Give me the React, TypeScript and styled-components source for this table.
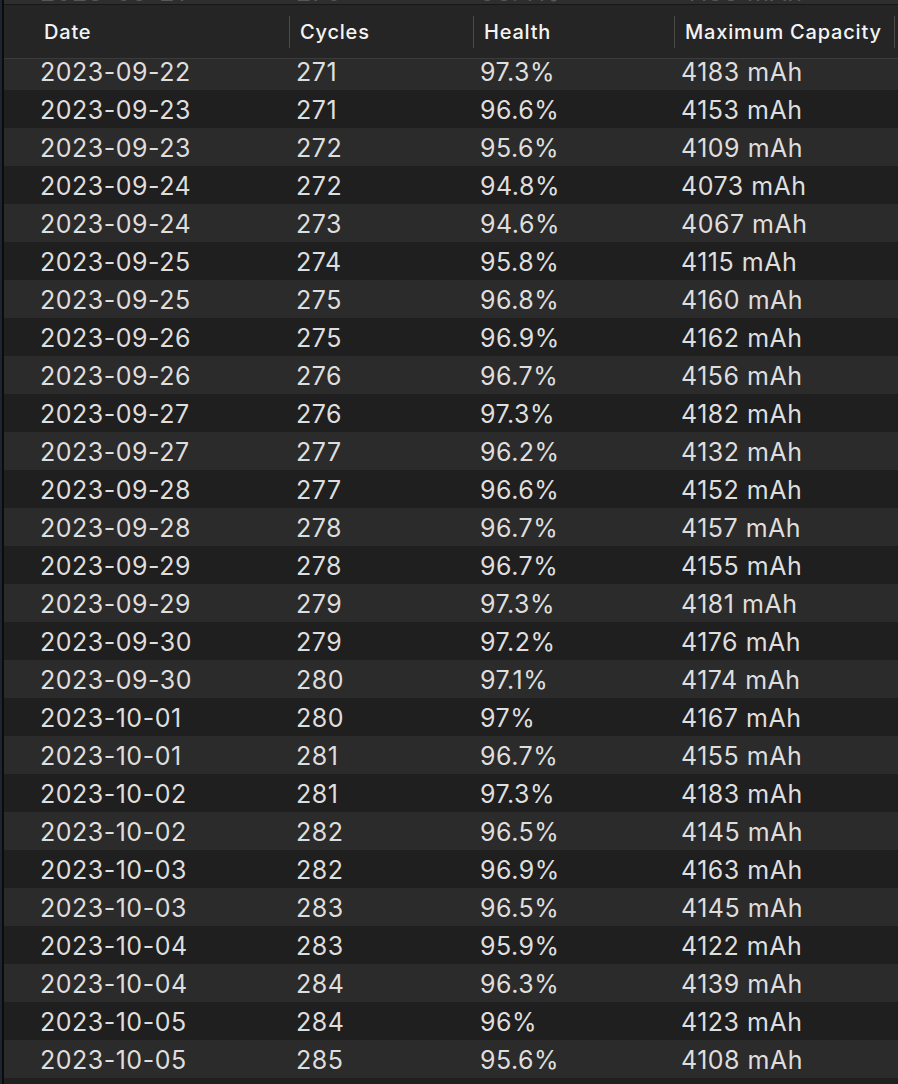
import React from 'react';
import styled, { createGlobalStyle } from 'styled-components';

const GlobalStyle = createGlobalStyle`
  html, body {
    margin: 0;
    padding: 0;
    background: #1f1f1f;
  }
  body {
    font-family: Inter, "Noto Sans", "Liberation Sans", sans-serif;
    -webkit-font-smoothing: antialiased;
  }
`;

type Entry = { date: string; cycles: number; health: string; capacity: number };

const history: Entry[] = [
  { date: '2023-09-22', cycles: 271, health: '97.3%', capacity: 4183 },
  { date: '2023-09-23', cycles: 271, health: '96.6%', capacity: 4153 },
  { date: '2023-09-23', cycles: 272, health: '95.6%', capacity: 4109 },
  { date: '2023-09-24', cycles: 272, health: '94.8%', capacity: 4073 },
  { date: '2023-09-24', cycles: 273, health: '94.6%', capacity: 4067 },
  { date: '2023-09-25', cycles: 274, health: '95.8%', capacity: 4115 },
  { date: '2023-09-25', cycles: 275, health: '96.8%', capacity: 4160 },
  { date: '2023-09-26', cycles: 275, health: '96.9%', capacity: 4162 },
  { date: '2023-09-26', cycles: 276, health: '96.7%', capacity: 4156 },
  { date: '2023-09-27', cycles: 276, health: '97.3%', capacity: 4182 },
  { date: '2023-09-27', cycles: 277, health: '96.2%', capacity: 4132 },
  { date: '2023-09-28', cycles: 277, health: '96.6%', capacity: 4152 },
  { date: '2023-09-28', cycles: 278, health: '96.7%', capacity: 4157 },
  { date: '2023-09-29', cycles: 278, health: '96.7%', capacity: 4155 },
  { date: '2023-09-29', cycles: 279, health: '97.3%', capacity: 4181 },
  { date: '2023-09-30', cycles: 279, health: '97.2%', capacity: 4176 },
  { date: '2023-09-30', cycles: 280, health: '97.1%', capacity: 4174 },
  { date: '2023-10-01', cycles: 280, health: '97%', capacity: 4167 },
  { date: '2023-10-01', cycles: 281, health: '96.7%', capacity: 4155 },
  { date: '2023-10-02', cycles: 281, health: '97.3%', capacity: 4183 },
  { date: '2023-10-02', cycles: 282, health: '96.5%', capacity: 4145 },
  { date: '2023-10-03', cycles: 282, health: '96.9%', capacity: 4163 },
  { date: '2023-10-03', cycles: 283, health: '96.5%', capacity: 4145 },
  { date: '2023-10-04', cycles: 283, health: '95.9%', capacity: 4122 },
  { date: '2023-10-04', cycles: 284, health: '96.3%', capacity: 4139 },
  { date: '2023-10-05', cycles: 284, health: '96%', capacity: 4123 },
  { date: '2023-10-05', cycles: 285, health: '95.6%', capacity: 4108 },
];

const COLUMNS = '285px 184px 201px 1fr';

const Frame = styled.div`
  height: 1084px;
  padding-left: 2px;
  background: #1c2632;
  overflow: hidden;
`;

const Window = styled.div`
  height: 100%;
  border-left: 2px solid #0b0b0b;
  display: flex;
  flex-direction: column;
  background: #1f1f1f;
  overflow: hidden;
`;

const TopStrip = styled.div`
  height: 4px;
  flex: none;
  background: #2e2e2e;
  border-bottom: 1px solid #171717;
  display: grid;
  grid-template-columns: ${COLUMNS};
  align-items: end;
  overflow: hidden;
`;

const GhostCell = styled.div<{ $first?: boolean }>`
  padding-left: ${(p) => (p.$first ? '36px' : '7px')};
  font-size: 25px;
  letter-spacing: 0.5px;
  line-height: 1;
  height: 4px;
  color: #585858;
  white-space: nowrap;
  display: flex;
  align-items: flex-end;

  span {
    display: block;
    margin-bottom: -1px;
  }
`;

const Header = styled.div`
  height: 53px;
  flex: none;
  display: grid;
  grid-template-columns: ${COLUMNS};
  align-items: center;
  background: #252525;
  border-bottom: 1px solid #3b3b3b;
  position: relative;
  z-index: 1;
`;

const HeaderCell = styled.div<{ $first?: boolean; $last?: boolean }>`
  position: relative;
  height: 100%;
  display: flex;
  align-items: center;
  padding-left: ${(p) => (p.$first ? '40px' : '11px')};
  font-size: 20px;
  font-weight: 500;
  letter-spacing: 0.8px;
  color: #f4f4f4;
  white-space: nowrap;

  &::before {
    content: ${(p) => (p.$first ? 'none' : "''")};
    position: absolute;
    left: 0;
    top: 11px;
    bottom: 10px;
    width: 1px;
    background: #4a4a4a;
  }

  &::after {
    content: ${(p) => (p.$last ? "''" : 'none')};
    position: absolute;
    right: 3px;
    top: 11px;
    bottom: 10px;
    width: 1px;
    background: #4a4a4a;
  }
`;

const Body = styled.div`
  flex: 1;
  overflow: hidden;
  background: #1f1f1f;
`;

const RowList = styled.div`
  margin-top: -7px;
`;

const Row = styled.div<{ $odd: boolean }>`
  height: 38px;
  display: grid;
  grid-template-columns: ${COLUMNS};
  align-items: center;
  background: ${(p) => (p.$odd ? '#2b2b2b' : '#1f1f1f')};
`;

const Cell = styled.div<{ $first?: boolean }>`
  padding-left: ${(p) => (p.$first ? '36px' : '7px')};
  padding-top: 2px;
  font-size: 25px;
  letter-spacing: 0.5px;
  line-height: 30px;
  color: #dedede;
  white-space: nowrap;
`;

export default function App() {
  return (
    <>
      <GlobalStyle />
      <Frame>
        <Window>
          <TopStrip aria-hidden>
            <GhostCell $first><span>2023-09-21</span></GhostCell>
            <GhostCell><span>270</span></GhostCell>
            <GhostCell><span>96.4%</span></GhostCell>
            <GhostCell><span>4153 mAh</span></GhostCell>
          </TopStrip>
          <Header>
            <HeaderCell $first>Date</HeaderCell>
            <HeaderCell>Cycles</HeaderCell>
            <HeaderCell>Health</HeaderCell>
            <HeaderCell $last>Maximum Capacity</HeaderCell>
          </Header>
          <Body>
            <RowList>
              {history.map((entry, i) => (
                <Row key={i} $odd={i % 2 === 0}>
                  <Cell $first>{entry.date}</Cell>
                  <Cell>{entry.cycles}</Cell>
                  <Cell>{entry.health}</Cell>
                  <Cell>{entry.capacity} mAh</Cell>
                </Row>
              ))}
              <Row $odd={false} />
            </RowList>
          </Body>
        </Window>
      </Frame>
    </>
  );
}
